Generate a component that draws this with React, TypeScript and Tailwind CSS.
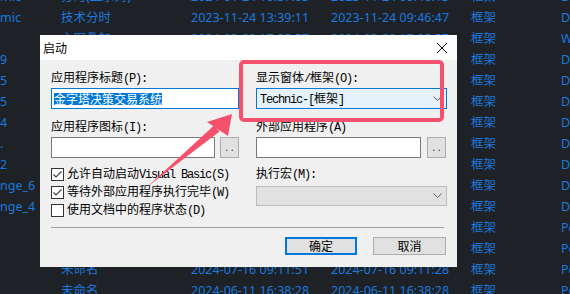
const rows = [
  { a: "mic", b: "分时(显示对)", c: "2024-01-24 10:37:03", d: "2023-11-24 09:46:13", f: "D" },
  { a: "mic", b: "技术分时", c: "2023-11-24 13:39:11", d: "2023-11-24 09:46:47", f: "D" },
  { a: "", b: "主图叠加", c: "2024-03-20 17:05:57", d: "2024-03-20 17:05:57", f: "W" },
  { a: "9", b: "", c: "", d: "", f: "D" },
  { a: "5", b: "", c: "", d: "", f: "D" },
  { a: "5", b: "", c: "", d: "", f: "D" },
  { a: "4", b: "", c: "", d: "", f: "D" },
  { a: ".", b: "", c: "", d: "", f: "D" },
  { a: "2", b: "", c: "", d: "", f: "D" },
  { a: "nge_6", b: "", c: "", d: "", f: "D" },
  { a: "nge_4", b: "", c: "", d: "", f: "D" },
  { a: "", b: "", c: "", d: "", f: "Po" },
  { a: "", b: "", c: "", d: "", f: "Po" },
  { a: "", b: "未命名", c: "2024-07-16 09:11:51", d: "2024-07-16 09:11:28", f: "Po" },
  { a: "", b: "未命名", c: "2024-06-11 16:38:28", d: "2024-06-11 16:38:28", f: "Po" },
];

// SimSun-ish look: every half-width char gets a fixed 6px cell, CJK runs at 12px
function Mixed({ text }: { text: string }) {
  const parts = text.match(/[\x00-\x7f]+|[^\x00-\x7f]+/g) ?? [];
  return (
    <>
      {parts.map((p, i) =>
        /^[\x00-\x7f]/.test(p) ? (
          <span key={i} className="font-['Liberation_Mono',monospace] text-[12px]">
            {p.split("").map((ch, j) => (
              <span key={j} className="inline-block w-[6px] text-center whitespace-pre">
                {ch}
              </span>
            ))}
          </span>
        ) : (
          <span key={i}>{p}</span>
        )
      )}
    </>
  );
}

function Chevron() {
  return (
    <svg width="9" height="6" viewBox="0 0 9 6">
      <path d="M0.5 0.5 L4.5 4.5 L8.5 0.5" fill="none" stroke="#606060" strokeWidth="1" />
    </svg>
  );
}

function Check({ checked, label }: { checked: boolean; label: string }) {
  return (
    <div className="h-[18px] flex items-center gap-[3px]">
      <div className="w-[13px] h-[13px] border border-[#333333] bg-white flex items-center justify-center">
        {checked && (
          <svg width="11" height="11" viewBox="0 0 11 11">
            <path d="M1.5 5.5 L4 8 L9.5 2.5" fill="none" stroke="#444444" strokeWidth="1.2" />
          </svg>
        )}
      </div>
      <div className="leading-[14px] whitespace-nowrap">
        <Mixed text={label} />
      </div>
    </div>
  );
}

function Browse() {
  return (
    <div className="w-[19px] h-[21px] border border-[#adadad] bg-[#e1e1e1] flex items-end justify-center pb-[3px] font-['Liberation_Mono',monospace] text-[9px] leading-[9px] text-[#333]">
      ..
    </div>
  );
}

export default function App() {
  return (
    <div className="relative w-[570px] h-[294px] overflow-hidden bg-[#1e2227] font-['Noto_Sans','Noto_Sans_CJK_SC',sans-serif] text-[12.5px] text-[#1b78dc]">
      <div className="mt-[-14px] flex flex-col">
        {rows.map((r, i) => (
          <div key={i} className="h-[21px] leading-[21px] flex whitespace-nowrap">
            <div className="w-[61px] shrink-0">{r.a}</div>
            <div className="w-[130px] shrink-0">{r.b}</div>
            <div className="w-[140px] shrink-0">{r.c}</div>
            <div className="w-[140px] shrink-0">{r.d}</div>
            <div className="w-[90px] shrink-0">框架</div>
            <div className="shrink-0">{r.f}</div>
          </div>
        ))}
      </div>

      <div className="absolute left-[40px] top-[35px] w-[417px] h-[232px] flex flex-col text-black text-[12px] font-['Noto_Sans_CJK_SC',sans-serif]">
        <div className="h-[25px] bg-white flex items-center justify-between pl-[3px] pr-[10px]">
          <span className="leading-[14px]">启动</span>
          <svg width="10" height="10" viewBox="0 0 10 10">
            <path d="M0 0 L10 10 M10 0 L0 10" stroke="#000" strokeWidth="1" />
          </svg>
        </div>
        <div className="flex-1 bg-[#f0f0f0] pt-[10px] pl-[11px] pr-[10px]">
          <div className="flex gap-[17px]">
            <div className="w-[188px] flex flex-col">
              <div className="h-[14px] leading-[14px] whitespace-nowrap">
                <Mixed text="应用程序标题(P):" />
              </div>
              <div className="mt-[4px] h-[21px] border border-[#0078d7] bg-white flex items-center pl-[2px]">
                <span className="bg-[#0078d7] text-white leading-[12px]">金字塔决策交易系统</span>
              </div>
              <div className="mt-[10px] h-[14px] leading-[14px] whitespace-nowrap">
                <Mixed text="应用程序图标(I):" />
              </div>
              <div className="mt-[4px] flex gap-[5px]">
                <div className="w-[164px] h-[21px] border border-[#7a7a7a] bg-white" />
                <Browse />
              </div>
              <div className="mt-[7px] flex flex-col">
                <Check checked label="允许自动启动Visual Basic(S)" />
                <Check checked label="等待外部应用程序执行完毕(W)" />
                <Check checked={false} label="使用文档中的程序状态(D)" />
              </div>
            </div>
            <div className="w-[191px] flex flex-col">
              <div className="h-[14px] leading-[14px] whitespace-nowrap">
                <Mixed text="显示窗体/框架(O):" />
              </div>
              <div className="mt-[4px] h-[21px] border border-[#0078d7] bg-[#e5f1fb] flex items-center justify-between pl-[3px] pr-[4px]">
                <span className="leading-[14px] whitespace-nowrap">
                  <Mixed text="Technic-[框架]" />
                </span>
                <Chevron />
              </div>
              <div className="mt-[10px] h-[14px] leading-[14px] whitespace-nowrap">
                <Mixed text="外部应用程序(A)" />
              </div>
              <div className="mt-[4px] flex gap-[6px]">
                <div className="w-[165px] h-[21px] border border-[#7a7a7a] bg-white" />
                <Browse />
              </div>
              <div className="mt-[8px] h-[14px] leading-[14px] whitespace-nowrap">
                <Mixed text="执行宏(M):" />
              </div>
              <div className="mt-[6px] h-[20px] border border-[#bcbcbc] bg-[#e1e1e1] flex items-center justify-end pr-[4px]">
                <Chevron />
              </div>
            </div>
          </div>
          <div className="mt-[8px] h-px w-[393px] bg-[#a0a0a0]" />
          <div className="mt-[9px] flex justify-end gap-[16px] pr-[1px]">
            <div className="w-[72px] h-[18px] border-2 border-[#0078d7] bg-[#e1e1e1] flex items-center justify-center leading-[14px]">
              确定
            </div>
            <div className="w-[73px] h-[18px] border border-[#adadad] bg-[#e1e1e1] flex items-center justify-center leading-[14px]">
              取消
            </div>
          </div>
        </div>
      </div>

      <div className="absolute left-[239px] top-[60px] w-[205px] h-[62px] border-4 border-[#f4516c] rounded-[5px] pointer-events-none" />

      <svg className="absolute inset-0 pointer-events-none" width="570" height="294" viewBox="0 0 570 294">
        <polygon points="147,187 219.5,131.5 214,125.5" fill="#f4516c" />
        <polygon points="232,114 207,122 228,136" fill="#f4516c" />
      </svg>
    </div>
  );
}
